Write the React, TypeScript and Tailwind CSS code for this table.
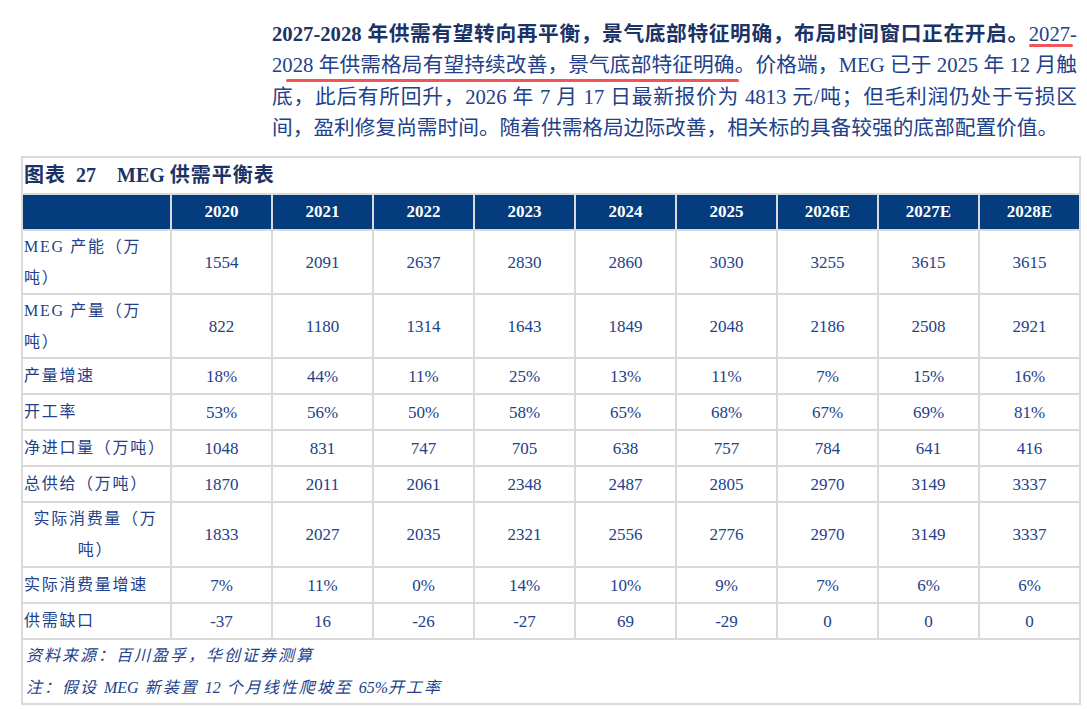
import React from 'react'

interface Row {
  label: string
  values: string[]
  tall?: boolean
  center?: boolean
}

const years = ['2020', '2021', '2022', '2023', '2024', '2025', '2026E', '2027E', '2028E']

const rows: Row[] = [
  { label: 'MEG 产能（万吨）', tall: true, values: ['1554', '2091', '2637', '2830', '2860', '3030', '3255', '3615', '3615'] },
  { label: 'MEG 产量（万吨）', tall: true, values: ['822', '1180', '1314', '1643', '1849', '2048', '2186', '2508', '2921'] },
  { label: '产量增速', values: ['18%', '44%', '11%', '25%', '13%', '11%', '7%', '15%', '16%'] },
  { label: '开工率', values: ['53%', '56%', '50%', '58%', '65%', '68%', '67%', '69%', '81%'] },
  { label: '净进口量（万吨）', values: ['1048', '831', '747', '705', '638', '757', '784', '641', '416'] },
  { label: '总供给（万吨）', values: ['1870', '2011', '2061', '2348', '2487', '2805', '2970', '3149', '3337'] },
  { label: '实际消费量（万吨）', tall: true, center: true, values: ['1833', '2027', '2035', '2321', '2556', '2776', '2970', '3149', '3337'] },
  { label: '实际消费量增速', values: ['7%', '11%', '0%', '14%', '10%', '9%', '7%', '6%', '6%'] },
  { label: '供需缺口', values: ['-37', '16', '-26', '-27', '69', '-29', '0', '0', '0'] },
]

const serif = "font-['Liberation_Serif','Noto_Sans_CJK_SC',serif]"

export default function App() {
  return (
    <div className={`min-h-screen w-[1087px] bg-white ${serif}`}>
      {/* paragraph */}
      <div className="ml-[272px] w-[805px] pt-[19px] text-[20.7px] leading-[31.4px] text-[#22418a]">
        <div className="text-justify [text-align-last:justify] whitespace-nowrap">
          <span className="font-bold text-[#1b3366]">
            2027-2028 年供需有望转向再平衡，景气底部特征明确，布局时间窗口正在开启。
          </span>
          <span className="relative">
            2027-
            <span className="absolute left-0 right-[4px] bottom-[-2px] h-[3px] rounded-full bg-[#f2545b]"></span>
          </span>
        </div>
        <div className="text-justify [text-align-last:justify] whitespace-nowrap">
          <span className="relative">
            2028 年供需格局有望持续改善，景气底部特征明确
            <span className="absolute left-[14px] right-[-4px] bottom-[-6px] h-[3px] rounded-full bg-[#f2545b]"></span>
          </span>
          。价格端，MEG 已于 2025 年 12 月触
        </div>
        <div className="text-justify [text-align-last:justify] whitespace-nowrap">
          底，此后有所回升，2026 年 7 月 17 日最新报价为 4813 元/吨；但毛利润仍处于亏损区
        </div>
        <div className="whitespace-nowrap">
          间，盈利修复尚需时间。随着供需格局边际改善，相关标的具备较强的底部配置价值。
        </div>
      </div>

      {/* table */}
      <div className="ml-[21px] mt-[11px] w-[1060px] border-2 border-[#dadada]">
        <div className="flex h-[35px] items-center pl-[1px] text-[20px] font-bold text-[#1b3366]">
          <span className="tracking-[1px]">图表</span>
          <span className="ml-[10px]">27</span>
          <span className="ml-[21px]">MEG</span>
          <span className="ml-[5px] tracking-[1px]">供需平衡表</span>
        </div>

        <div className="grid grid-cols-[147px_repeat(9,99px)] grid-rows-[34px_62px_62px_34px_34px_34px_34px_63px_34px_34px] gap-[2px] border-y-2 border-[#dadada] bg-[#dadada]">
          <div className="bg-[#053c7d]"></div>
          {years.map((y) => (
            <div
              key={y}
              className="flex items-center justify-center bg-[#053c7d] text-[17px] font-bold text-white"
            >
              {y}
            </div>
          ))}

          {rows.map((row) => (
            <React.Fragment key={row.label}>
              <div
                className={`flex items-center bg-white pl-[1px] pr-[3px] text-[16px] leading-[31px] tracking-[1.7px] text-[#22418a] ${
                  row.center ? 'justify-center text-center' : ''
                }`}
              >
                <span>{row.label}</span>
              </div>
              {row.values.map((v, i) => (
                <div
                  key={i}
                  className="flex items-center justify-center bg-white pt-[2px] text-[17px] text-[#22418a]"
                >
                  {v}
                </div>
              ))}
            </React.Fragment>
          ))}
        </div>

        <div className="h-[63px] pl-[3px] text-[16px] italic leading-[32px] tracking-[2px] text-[#22418a]">
          <div>资料来源：百川盈孚，华创证券测算</div>
          <div>
            注：假设 <span className="tracking-normal">MEG</span> 新装置 <span className="tracking-normal">12</span> 个月线性爬坡至{' '}
            <span className="tracking-normal">65%</span>开工率
          </div>
        </div>
      </div>
    </div>
  )
}
